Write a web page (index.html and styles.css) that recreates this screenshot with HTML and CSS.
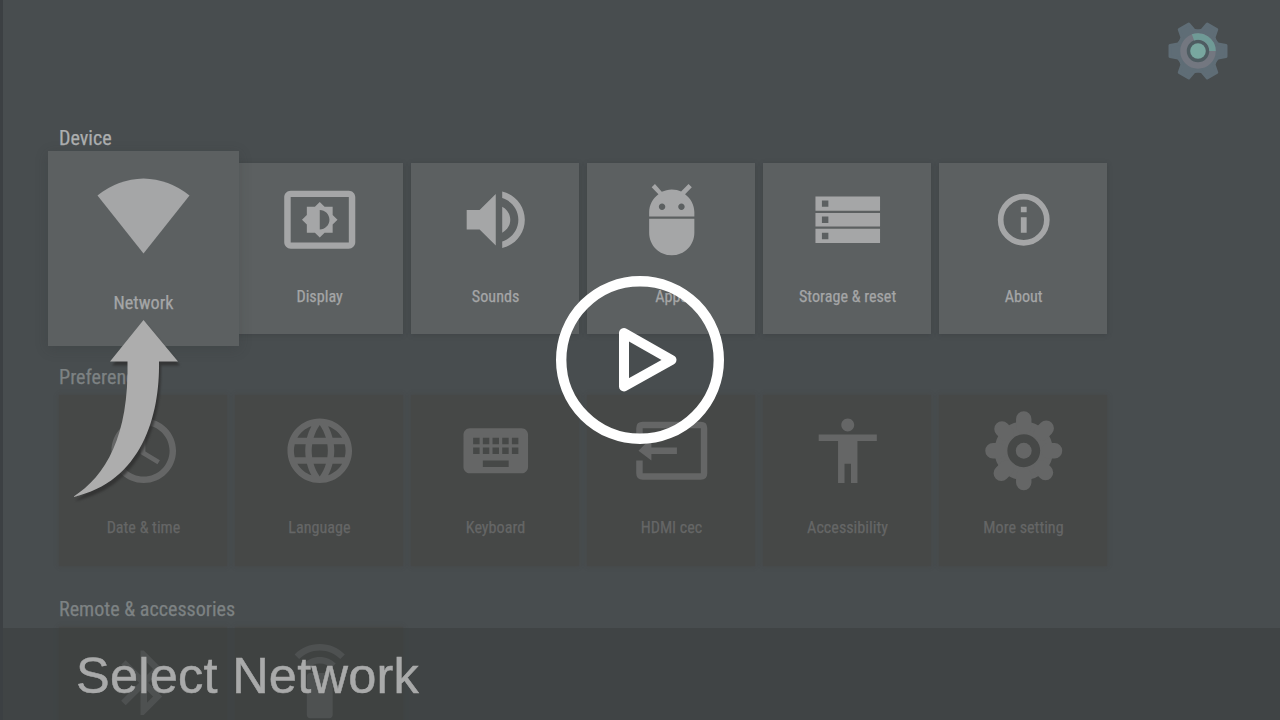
FILE: index.html
```
<!DOCTYPE html>
<html lang="en">
<head>
<meta charset="utf-8">
<title>Settings</title>
<link rel="stylesheet" href="styles.css">
</head>
<body>
<main class="screen">
  <svg class="settings-gear" viewBox="-30 -30 60 60">
    <g fill="#5f6d76" stroke="#5f6d76" stroke-width="3" stroke-linejoin="round">
      <circle r="20"/>
      <path id="tooth" d="M-28-5.500L-20-7L-15-12V12L-20 7L-28 5.500ZM28-5.500L20-7L15-12V12L20 7L28 5.500Z"/>
      <use href="#tooth" transform="rotate(60)"/>
      <use href="#tooth" transform="rotate(120)"/>
    </g>
    <circle r="14.500" fill="#4e5c61" stroke="#737780" stroke-width="6.500"/>
    <path d="M-5-13.600A14.500 14.500 0 0 1 14.500 0" fill="none" stroke="#6f9a96" stroke-width="6.500"/>
    <circle r="7.800" fill="#78a79f"/>
  </svg>

  <section class="group device">
    <h2>Device</h2>
    <div class="tiles">
      <div class="tile focused">
        <svg viewBox="0 0 192 140"><path d="M49.500 44.500Q70 28 95.500 27.500Q121 28 141.500 44.500L95.500 102.500Z"/></svg>
        <p>Network</p>
      </div>
      <div class="tile">
        <svg viewBox="0 0 24 24"><path d="M21 3H3c-1.100 0-2 .9-2 2v14c0 1.100.9 2 2 2h18c1.100 0 2-.9 2-2V5c0-1.100-.9-2-2-2zm0 16.010H3V4.990h18v14.020zM8 16h2.500l1.500 1.500 1.500-1.500H16v-2.500l1.500-1.500-1.500-1.500V8h-2.500L12 6.500 10.500 8H8v2.500L6.500 12 8 13.500V16zm4-7c1.660 0 3 1.340 3 3s-1.340 3-3 3V9z"/></svg>
        <p>Display</p>
      </div>
      <div class="tile">
        <svg viewBox="0 0 24 24"><path d="M3 9v6h4l5 5V4L7 9H3zm13.500 3c0-1.770-1.020-3.290-2.500-4.030v8.050c1.480-.73 2.500-2.250 2.500-4.020zM14 3.230v2.060c2.890.86 5 3.540 5 6.710s-2.110 5.850-5 6.710v2.060c4.010-.91 7-4.490 7-8.770s-2.990-7.860-7-8.770z"/></svg>
        <p>Sounds</p>
      </div>
      <div class="tile">
        <svg viewBox="0 0 24 24"><path d="M5 16c0 3.870 3.130 7 7 7s7-3.130 7-7v-4.300H5v4.300zM16.120 4.070l2.100-2.100-1.020-1.030-2.300 2.310C14.160 2.880 13.120 2.600 12 2.600s-2.140.28-3.090.75L6.800.94l-1.020 1.030 2.100 2.100C6.140 5.340 5 7.380 5 9.700v1.300h14v-1.300c0-2.320-1.140-4.360-2.880-5.630zM9 9c-.55 0-1-.45-1-1s.45-1 1-1 1 .45 1 1-.45 1-1 1zm6 0c-.55 0-1-.45-1-1s.45-1 1-1 1 .45 1 1-.45 1-1 1z"/></svg>
        <p>Apps</p>
      </div>
      <div class="tile">
        <svg viewBox="0 0 24 24"><path fill-rule="evenodd" d="M2 4.800h20v4.400H2zM4 6v2h2V6zM2 9.900h20v4.200H2zM4 11v2h2v-2zM2 14.800h20v4.400H2zM4 16v2h2v-2z"/></svg>
        <p>Storage &amp; reset</p>
      </div>
      <div class="tile">
        <svg viewBox="0 0 24 24"><circle cx="12" cy="12" r="7.150" fill="none" stroke="currentColor" stroke-width="1.750"/><path d="M11.100 8h1.800v1.700h-1.800zM11.100 11.200h1.800V16h-1.800z"/></svg>
        <p>About</p>
      </div>
    </div>
  </section>

  <section class="group dim">
    <h2>Preferences</h2>
    <div class="tiles">
      <div class="tile">
        <svg viewBox="0 0 24 24"><path d="M11.990 2C6.470 2 2 6.480 2 12s4.470 10 9.990 10C17.520 22 22 17.520 22 12S17.520 2 11.990 2zM12 20c-4.420 0-8-3.580-8-8s3.580-8 8-8 8 3.580 8 8-3.580 8-8 8zM12.500 7H11v6l5.250 3.150.75-1.230-4.500-2.670z"/></svg>
        <p>Date &amp; time</p>
      </div>
      <div class="tile">
        <svg viewBox="0 0 24 24"><path d="M11.990 2C6.470 2 2 6.480 2 12s4.470 10 9.990 10C17.520 22 22 17.520 22 12S17.520 2 11.990 2zm6.930 6h-2.950c-.32-1.250-.78-2.450-1.380-3.560 1.840.63 3.370 1.910 4.330 3.560zM12 4.040c.83 1.200 1.480 2.530 1.910 3.960h-3.820c.43-1.430 1.080-2.760 1.910-3.960zM4.260 14C4.100 13.360 4 12.690 4 12s.1-1.360.26-2h3.380c-.08.66-.14 1.320-.14 2s.06 1.340.14 2H4.260zm.82 2h2.950c.32 1.250.78 2.450 1.380 3.560-1.840-.63-3.370-1.900-4.330-3.560zm2.950-8H5.080c.96-1.660 2.490-2.930 4.330-3.560C8.810 5.550 8.350 6.750 8.030 8zM12 19.960c-.83-1.200-1.480-2.530-1.910-3.960h3.820c-.43 1.430-1.080 2.760-1.910 3.960zM14.340 14H9.660c-.09-.66-.16-1.320-.16-2s.07-1.350.16-2h4.680c.09.65.16 1.320.16 2s-.07 1.340-.16 2zm.25 5.560c.6-1.110 1.060-2.310 1.380-3.560h2.950c-.96 1.650-2.490 2.930-4.330 3.560zM16.360 14c.08-.66.14-1.320.14-2s-.06-1.340-.14-2h3.380c.16.64.26 1.310.26 2s-.1 1.360-.26 2h-3.380z"/></svg>
        <p>Language</p>
      </div>
      <div class="tile">
        <svg viewBox="0 0 24 24"><path d="M20 5H4c-1.100 0-1.990.9-1.990 2L2 17c0 1.100.9 2 2 2h16c1.100 0 2-.9 2-2V7c0-1.100-.9-2-2-2zm-9 3h2v2h-2V8zm0 3h2v2h-2v-2zM8 8h2v2H8V8zm0 3h2v2H8v-2zm-1 2H5v-2h2v2zm0-3H5V8h2v2zm9 7H8v-2h8v2zm0-4h-2v-2h2v2zm0-3h-2V8h2v2zm3 3h-2v-2h2v2zm0-3h-2V8h2v2z"/></svg>
        <p>Keyboard</p>
      </div>
      <div class="tile">
        <svg viewBox="0 0 24 24"><path d="M3 3H21Q23 3 23 5V19Q23 21 21 21H3Q1 21 1 19V15H3V19H21V5H3V9H1V5Q1 3 3 3ZM1.700 12L5.700 8V11H13.600V13H5.700V15Z"/></svg>
        <p>HDMI cec</p>
      </div>
      <div class="tile">
        <svg viewBox="0 0 24 24"><path d="M12 2c1.100 0 2 .9 2 2s-.9 2-2 2-2-.9-2-2 .9-2 2-2zm9 7h-6v13h-2v-6h-2v6H9V9H3V7h18v2z"/></svg>
        <p>Accessibility</p>
      </div>
      <div class="tile">
        <svg viewBox="-39 -39 78 78">
          <circle r="23" fill="none" stroke="currentColor" stroke-width="13"/>
          <g id="cog" stroke="currentColor" stroke-width="15.500" stroke-linecap="round"><path d="M0-32V-25M0 32V25M-31-0H-25M31 0H25"/></g>
          <use href="#cog" transform="rotate(45)"/>
          <circle r="8"/>
        </svg>
        <p>More setting</p>
      </div>
    </div>
  </section>

  <section class="group dim">
    <h2>Remote &amp; accessories</h2>
    <div class="tiles">
      <div class="tile">
        <svg viewBox="0 0 24 24"><path d="M17.710 7.710L12 2h-1v7.590L6.410 5 5 6.410 10.590 12 5 17.590 6.410 19 11 14.410V22h1l5.710-5.710-4.300-4.290 4.300-4.290zM13 5.830l1.880 1.880L13 9.590V5.830zm1.880 10.460L13 18.170v-3.760l1.880 1.880z"/></svg>
      </div>
      <div class="tile">
        <svg viewBox="0 0 24 24"><path d="M15 9H9c-.55 0-1 .45-1 1v12c0 .55.45 1 1 1h6c.55 0 1-.45 1-1V10c0-.55-.45-1-1-1zM7.050 6.050l1.410 1.410C9.370 6.560 10.620 6 12 6s2.630.56 3.540 1.460l1.410-1.410C15.680 4.780 13.930 4 12 4s-3.680.78-4.950 2.050zM12 0C8.960 0 6.210 1.230 4.220 3.220l1.410 1.410C7.260 3.010 9.510 2 12 2s4.740 1.010 6.360 2.640l1.410-1.410C17.790 1.230 15.040 0 12 0z"/></svg>
      </div>
    </div>
  </section>

  <div class="caption">Select Network</div>

  <svg class="arrow" viewBox="0 0 120 190">
    <path d="M76.500 10L111 51.500H92C93 105 75 172 6 187C39 166 62 126 60.500 51.500H43Z"/>
  </svg>

  <svg class="play" viewBox="0 0 168 168">
    <circle cx="84" cy="84" r="78.800" stroke-width="10.400"/>
    <path d="M68 57V110.500L115.500 84Z" stroke-width="10" stroke-linejoin="round"/>
  </svg>
</main>
</body>
</html>
```
FILE: styles.css
```
* { box-sizing: border-box; }
body { margin: 0; background: #484d4f; }
.screen {
  position: relative;
  width: 1280px;
  height: 720px;
  overflow: hidden;
  padding: 125px 0 0 56px;
  border-left: 3px solid #3c4043;
  background: #484d4f;
  font-family: "Roboto Condensed", Roboto, sans-serif;
  -webkit-text-stroke: .25px currentColor;
}
.settings-gear {
  position: absolute;
  left: 1165px;
  top: 21px;
  width: 60px;
  height: 60px;
}
.group { height: 232px; color: #656666; }
.group h2 {
  margin: 0;
  height: 31px;
  line-height: 26px;
  font-size: 20.100px;
  font-weight: 400;
  color: #7d8283;
}
.device { height: 239px; color: #a5a6a7; }
.device h2 { height: 38px; color: #adafaf; }
.tiles { display: flex; gap: 8px; padding-left: .3px; }
.tile {
  display: flex;
  flex: none;
  flex-direction: column;
  align-items: center;
  width: 168px;
  height: 171px;
  padding: 17.500px 0 0 .4px;
  background: #5c6061;
  box-shadow: 0 1px 5px rgba(45, 50, 52, .3);
}
.dim .tile {
  padding-top: 17px;
  background: #464847;
  box-shadow: 0 0 4px rgba(70, 70, 68, .8);
}
.tile svg { flex: none; width: 77.500px; height: 77.500px; fill: currentColor; overflow: visible; }
.tile p { margin: 28px 0 0; font-size: 16.150px; line-height: 22px; white-space: nowrap; }
.dim .tile p { margin-top: 27px; }
.tile.focused {
  position: relative;
  width: 191px;
  height: 195px;
  margin: -12px -11.600px -12px -11.300px;
  padding: 0;
  box-shadow: 0 3px 12px rgba(45, 50, 52, .22);
}
.tile.focused svg { width: 192px; height: 140px; }
.tile.focused p { margin: 0; font-size: 18.200px; line-height: 23px; }
.caption {
  position: absolute;
  left: 0;
  right: 0;
  bottom: 0;
  height: 92px;
  padding-left: 73px;
  background: rgba(56, 59, 60, .5);
  font: 50.500px/95px "Liberation Sans", sans-serif;
  letter-spacing: .25px;
  -webkit-text-stroke: .5px currentColor;
  color: #a9aaaa;
}
.arrow {
  position: absolute;
  z-index: 2;
  left: 64px;
  top: 310px;
  width: 120px;
  height: 190px;
  fill: #adadad;
  filter: drop-shadow(2px 4px 1px rgba(45, 45, 45, .75));
}
.play {
  position: absolute;
  z-index: 2;
  left: 553px;
  top: 276px;
  width: 168px;
  height: 168px;
  fill: none;
  stroke: #fff;
}
```
